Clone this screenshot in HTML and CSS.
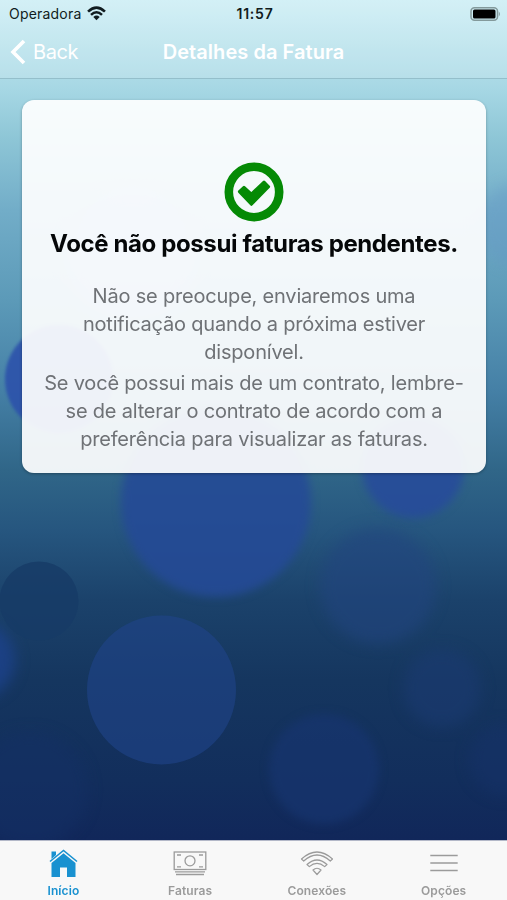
FILE: index.html
```html
<!DOCTYPE html>
<html lang="pt-BR">
<head>
  <meta charset="UTF-8">
  <meta name="viewport" content="width=device-width, initial-scale=1.0">
  <title>Detalhes da Fatura</title>
  <link rel="stylesheet" href="styles.css">
</head>
<body>
  <div class="app">
    <svg class="bubbles" viewBox="0 0 507 840" aria-hidden="true">
      <defs>
        <filter id="edge" x="-20%" y="-20%" width="140%" height="140%" color-interpolation-filters="sRGB"><feGaussianBlur stdDeviation="1.500"/></filter>
        <filter id="soft" x="-20%" y="-20%" width="140%" height="140%" color-interpolation-filters="sRGB"><feGaussianBlur stdDeviation="4"/></filter>
        <filter id="softer" x="-20%" y="-20%" width="140%" height="140%" color-interpolation-filters="sRGB"><feGaussianBlur stdDeviation="7"/></filter>
      </defs>
      <circle cx="59" cy="379" r="54" fill="#2c51ab" opacity=".88" filter="url(#edge)"/>
      <g filter="url(#soft)">
        <circle cx="216" cy="502" r="95" fill="#244a96" opacity=".88"/>
        <circle cx="413" cy="467" r="51" fill="#274b9b" opacity=".88"/>
        <circle cx="324" cy="769" r="55" fill="#17356f" opacity=".7"/>
      </g>
      <g filter="url(#softer)">
        <circle cx="132" cy="255" r="66" fill="#7f9fe0" opacity=".5"/>
        <circle cx="378" cy="586" r="58" fill="#21457f" opacity=".6"/>
        <circle cx="-24" cy="660" r="39" fill="#1d428c" opacity=".8"/>
        <circle cx="442" cy="688" r="39" fill="#1a3a72" opacity=".6"/>
        <circle cx="505" cy="760" r="36" fill="#15316a" opacity=".5"/>
        <circle cx="30" cy="790" r="58" fill="#132f66" opacity=".5"/>
        <circle cx="520" cy="225" r="42" fill="#6595c5" opacity=".4"/>
      </g>
      <circle cx="39" cy="601" r="39.500" fill="#163b67" opacity=".8"/>
      <circle cx="161.500" cy="690" r="74.500" fill="#20458a" opacity=".6"/>
    </svg>

    <header class="header">
      <div class="status">
        <div class="carrier">
          <span>Operadora</span>
          <svg class="signal" viewBox="0 0 18 14">
            <path d="M1 5.200Q9-2.400 17 5.200" fill="none" stroke="#111c20" stroke-width="2.500"/>
            <path d="M3.800 8.300Q9 3.300 14.200 8.300" fill="none" stroke="#111c20" stroke-width="2.400"/>
            <path d="M6 10.300Q9 7.600 12 10.300L9 13.500Z" fill="#111c20"/>
          </svg>
        </div>
        <div class="time">11:57</div>
        <svg class="battery" viewBox="0 0 31 14">
          <rect x="1" y=".8" width="26.500" height="12.400" rx="3.500" fill="none" stroke="#83999b" stroke-width="1.500"/>
          <rect x="3" y="2.600" width="22.500" height="8.800" rx="1.500" fill="#000"/>
          <path d="M28.800 4.500Q31 7 28.800 9.500Z" fill="#83999b"/>
        </svg>
      </div>
      <nav class="navbar">
        <a class="back">
          <svg class="chevron" viewBox="0 0 16 26"><path d="M14 2L3 13L14 24" fill="none" stroke="#fff" stroke-width="3.600"/></svg>
          <span>Back</span>
        </a>
        <h1 class="nav-title">Detalhes da Fatura</h1>
      </nav>
    </header>

    <main class="content">
      <section class="card">
        <svg class="check" viewBox="0 0 60 60">
          <circle cx="30" cy="30" r="25.200" fill="none" stroke="#058a05" stroke-width="8.600"/>
          <path d="M15.400 29.600L20 25.300L27.400 32L40 20.100L44.600 24.700L27.400 42.300Z" fill="#058a05" stroke="#058a05" stroke-width="3" stroke-linejoin="round"/>
        </svg>
        <h2 class="card-title">Você não possui faturas pendentes.</h2>
        <p class="card-text">Não se preocupe, enviaremos uma notificação quando a próxima estiver disponível.</p>
        <p class="card-text">Se você possui mais de um contrato, lembre-se de alterar o contrato de acordo com a preferência para visualizar as faturas.</p>
      </section>
    </main>

    <footer class="tabs">
      <a class="tab active">
        <svg class="tab-icon" viewBox="0 0 36 30">
          <path d="M6.500 3.500H11V7L6.500 11Z" fill="currentColor"/>
          <path d="M5 13.500L18.500 2.500L32 13.500" fill="none" stroke="currentColor" stroke-width="1.600"/>
          <path d="M6.500 15L18.500 5.200L30.500 15V29H22V19.500H15V29H6.500Z" fill="currentColor"/>
        </svg>
        <span>Início</span>
      </a>
      <a class="tab">
        <svg class="tab-icon" viewBox="0 0 36 30" fill="none" stroke="currentColor">
          <rect x="2.200" y="4" width="31.600" height="17.500" stroke-width="1.300"/>
          <circle cx="18" cy="12.800" r="5" stroke-width="1.300"/>
          <path d="M5 7H9M27 7H31M5 18.800H9M27 18.800H31M3 23.800H33M4 26.500H32" stroke-width="1.300"/>
        </svg>
        <span>Faturas</span>
      </a>
      <a class="tab">
        <svg class="tab-icon" viewBox="0 0 36 30" fill="none" stroke="currentColor" stroke-width="1.200" stroke-linejoin="round">
          <path d="M2.500 11Q18-3 33.500 11L31.300 13Q18 1 4.700 13Z"/>
          <path d="M8 16.500Q18 7.500 28 16.500L25.700 18.600Q18 12 10.300 18.600Z"/>
          <path d="M14 22Q18 18.500 22 22L18 26.500Z"/>
        </svg>
        <span>Conexões</span>
      </a>
      <a class="tab">
        <svg class="tab-icon" viewBox="0 0 36 30" fill="none" stroke="currentColor" stroke-width="1.500">
          <path d="M4.300 7.500H31.700M4.300 15H31.700M4.300 22.500H31.700"/>
        </svg>
        <span>Opções</span>
      </a>
    </footer>
  </div>
</body>
</html>
```

FILE: styles.css
```css
body {
  margin: 0;
  font-family: Inter, "Liberation Sans", sans-serif;
}

.app {
  position: relative;
  display: flex;
  flex-direction: column;
  height: 900px;
  overflow: hidden;
  background: linear-gradient(#cceef5 0, #a6d7e4 90px, #8fc7d7 135px, #72adc8 210px, #5c9ab8 300px, #4580a6 390px, #306688 470px, #26567f 530px, #1b426b 600px, #15365f 680px, #122e5c 780px, #11275a 840px);
}

.bubbles {
  position: absolute;
  top: 0;
  left: 0;
  width: 507px;
  height: 840px;
}

.header {
  position: relative;
  box-sizing: border-box;
  height: 79px;
  background: rgba(255, 255, 255, 0.15);
  border-bottom: 1px solid #94bfcb;
}

.status {
  display: grid;
  grid-template-columns: 1fr auto 1fr;
  align-items: center;
  height: 27px;
  padding: 0 6px 0 9px;
  font-size: 14px;
  color: #111c20;
}

.carrier {
  display: flex;
  align-items: center;
  gap: 6px;
  letter-spacing: 0.2px;
}

.signal {
  width: 19px;
  height: 15px;
}

.time {
  font-weight: 600;
  letter-spacing: 0.8px;
}

.battery {
  width: 31px;
  height: 14px;
  justify-self: end;
}

.navbar {
  display: grid;
  grid-template-columns: 1fr auto 1fr;
  align-items: center;
  height: 50px;
  color: #fff;
}

.back {
  display: flex;
  align-items: center;
  gap: 7px;
  padding-left: 10px;
  font-size: 20px;
  letter-spacing: -0.4px;
}

.chevron {
  width: 16px;
  height: 26px;
}

.nav-title {
  margin: 0;
  font-size: 20px;
  font-weight: 600;
  letter-spacing: 0.05px;
}

.content {
  position: relative;
  flex: 1;
  padding: 21px 21px 0 22px;
}

.card {
  display: flex;
  flex-direction: column;
  align-items: center;
  box-sizing: border-box;
  height: 373px;
  padding: 62px 20px 0;
  border-radius: 12px;
  background: rgba(255, 255, 255, 0.92);
  box-shadow: 0 1px 3px rgba(0, 0, 0, 0.3);
  text-align: center;
}

.check {
  width: 60px;
  height: 60px;
}

.card-title {
  margin: 6px 0 22px;
  font-size: 24px;
  line-height: 32px;
  font-weight: 700;
  letter-spacing: -0.38px;
  color: #050708;
  white-space: nowrap;
}

.card-text {
  margin: 0 0 3px;
  font-size: 20px;
  line-height: 28px;
  letter-spacing: -0.2px;
  color: #6f7276;
}

.tabs {
  position: relative;
  display: grid;
  grid-template-columns: repeat(4, 1fr);
  box-sizing: border-box;
  height: 60px;
  background: #f8f8f8;
  border-top: 1px solid #b3b8c8;
}

.tab {
  display: flex;
  flex-direction: column;
  align-items: center;
  padding-top: 7px;
  font-size: 12px;
  line-height: 16px;
  font-weight: 600;
  letter-spacing: 0.1px;
  color: #9b9b9b;
}

.tab-icon {
  width: 36px;
  height: 30px;
  margin-bottom: 5px;
}

.active {
  color: #1991d0;
}
```
